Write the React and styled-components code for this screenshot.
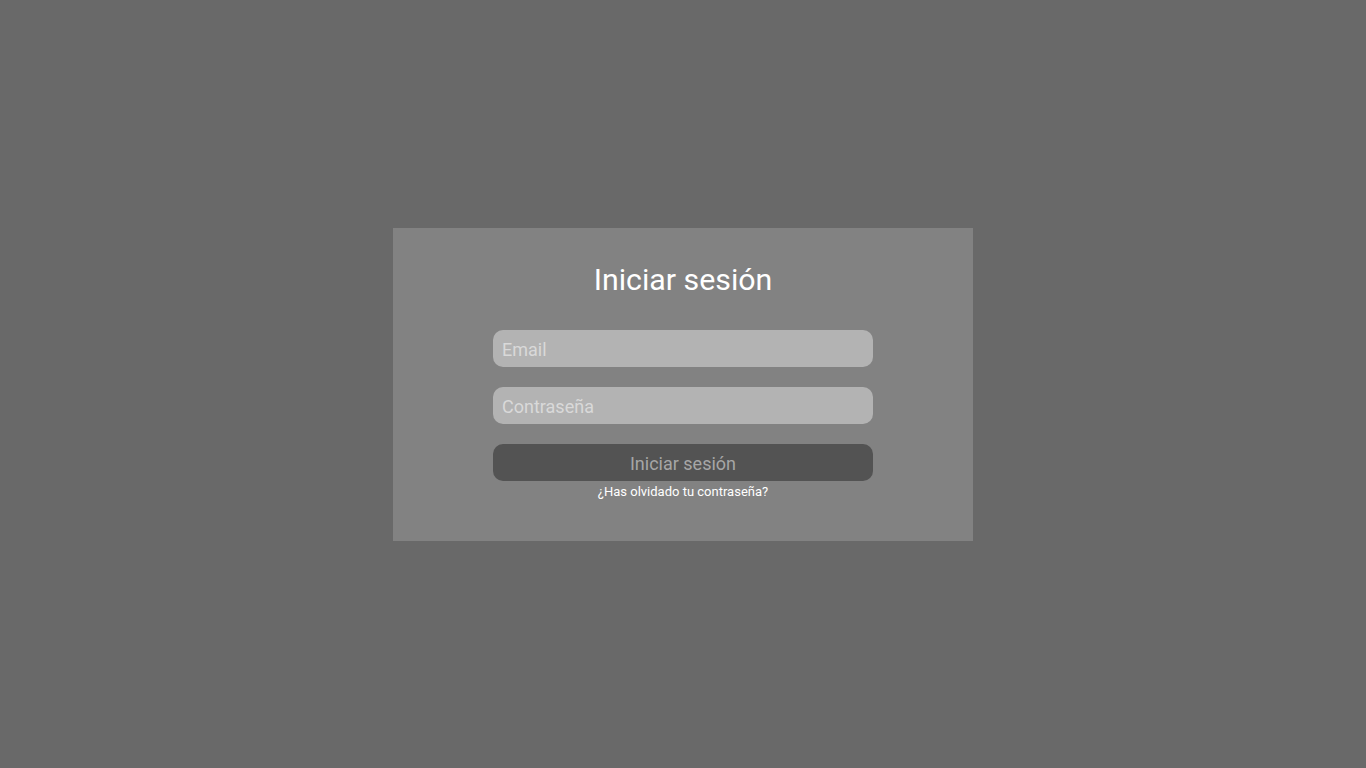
import React from "react";
import styled, { createGlobalStyle } from "styled-components";

const GlobalStyle = createGlobalStyle`
  html, body {
    margin: 0;
    padding: 0;
    height: 100%;
    background: #696969;
    font-family: Roboto, "Liberation Sans", sans-serif;
  }
  #root {
    height: 100%;
  }
`;

const App = () => {
  return (
    <>
      <GlobalStyle />
      <Page>
        <Card>
          <Title>Iniciar sesión</Title>
          <Form onSubmit={(e) => e.preventDefault()}>
            <Field type="email" placeholder="Email" />
            <Field type="password" placeholder="Contraseña" />
            <SubmitBtn type="submit">Iniciar sesión</SubmitBtn>
            <Forgot href="#">¿Has olvidado tu contraseña?</Forgot>
          </Form>
        </Card>
      </Page>
    </>
  );
};

const Page = styled.div`
  display: flex;
  justify-content: center;
  align-items: center;
  width: 100%;
  height: 768px;
`;

const Card = styled.div`
  display: flex;
  flex-direction: column;
  align-items: center;
  box-sizing: border-box;
  width: 580px;
  height: 313px;
  padding-top: 34px;
  background-color: #828282;
`;

const Title = styled.h1`
  height: 35px;
  margin: 0 0 33px;
  font-size: 30.3px;
  font-weight: 400;
  line-height: 35px;
  color: #ffffff;
`;

const Form = styled.form`
  display: flex;
  flex-direction: column;
  align-items: center;
  gap: 20px;
  width: 380px;
`;

const Field = styled.input`
  box-sizing: border-box;
  width: 100%;
  height: 37px;
  padding: 2px 9px 0;
  border: none;
  border-radius: 10px;
  outline: none;
  background-color: #b3b3b3;
  font-family: inherit;
  font-size: 18px;
  color: #333;

  &::placeholder {
    color: #d9d9d9;
  }
`;

const SubmitBtn = styled.button`
  width: 100%;
  height: 37px;
  padding-top: 4px;
  border: none;
  border-radius: 10px;
  background-color: #535353;
  font-family: inherit;
  font-size: 18px;
  color: #a6a6a6;
  cursor: pointer;
`;

const Forgot = styled.a`
  margin-top: -19px;
  font-size: 13px;
  line-height: 20px;
  color: #ffffff;
  text-decoration: none;
`;

export default App;
